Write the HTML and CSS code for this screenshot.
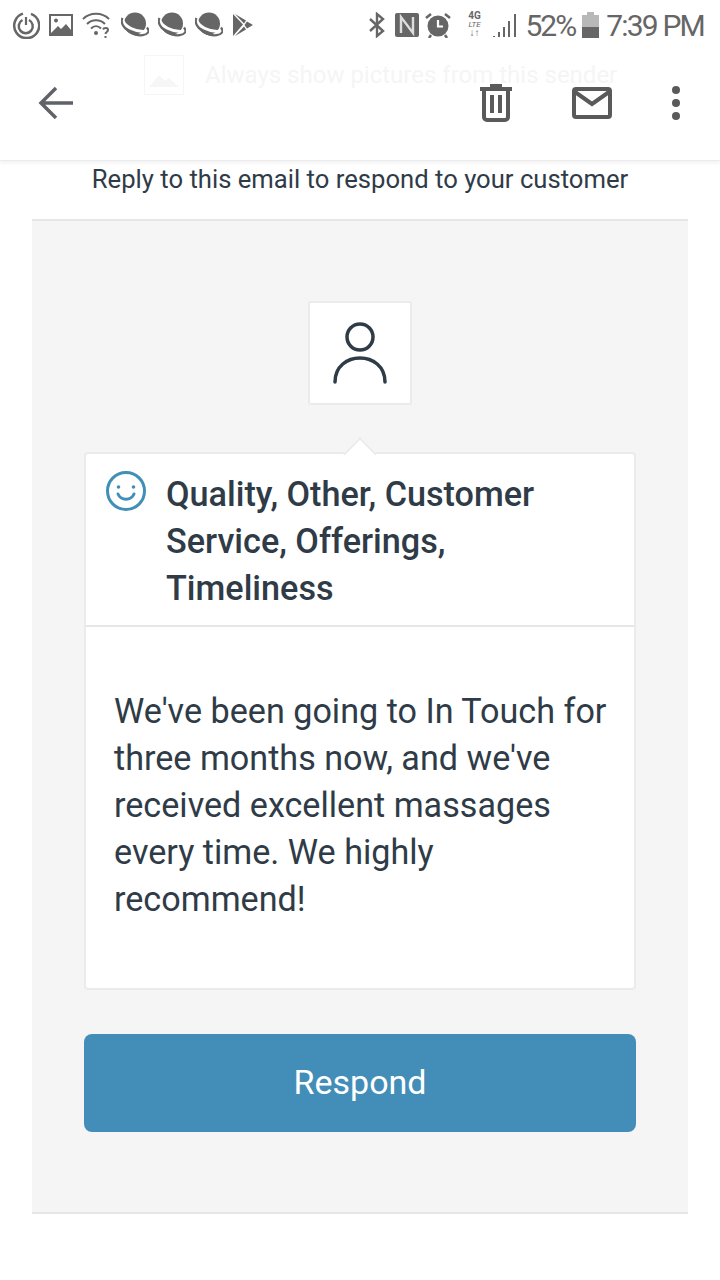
FILE: index.html
```html
<!DOCTYPE html>
<html lang="en">
<head>
    <meta charset="UTF-8">
    <meta name="viewport" content="width=device-width, initial-scale=1.0">
    <title>Review email</title>
    <link rel="stylesheet" href="styles.css">
</head>
<body>
    <svg class="sprite">
        <symbol id="planet" viewBox="0 0 28 26">
            <circle cx="14" cy="11.500" r="11" fill="#666"/>
            <path d="M1 6c1 8 13 15 26 13" fill="none" stroke="#fff" stroke-width="3"/>
            <path d="M1.500 6C-2 13 7 20 14 22.500c5 1.500 11 1 13-2 1-1 .5-3-1-5" fill="none" stroke="#666" stroke-width="2.200"/>
            <path d="M6 18c4 3 8 5 13 4-4 3-10 1-13-4z" fill="#666"/>
        </symbol>
    </svg>

    <header class="top">
        <div class="status">
            <div class="status-left">
                <svg width="28" height="28" viewBox="0 0 28 28" fill="none" stroke="#666" stroke-width="2.500"><path d="M19 2.800a12.500 12.500 0 1 1-8-.2"/><path d="M17 9a7 7 0 1 1-6.500 0"/><path d="M14 6v8" stroke-width="2.200"/></svg>
                <svg width="24" height="24" viewBox="0 0 24 24"><path fill="#666" d="M0 1h24v22H0z"/><path fill="#fff" d="M2 3h20v14l-5-6-5 5-3-3-7 7z"/><circle cx="7" cy="7.500" r="2" fill="#666"/></svg>
                <svg width="30" height="28" viewBox="0 0 30 28" fill="none" stroke="#666" stroke-width="2"><path d="M1 8c7-7 19-7 26 0M5 13c5-5 13-5 18 0M9 17.500c3-3 7-3 10 0"/><circle cx="14" cy="22" r="2" fill="#666" stroke="none"/><path d="M21 18.500c1-2 5-2 5 .5 0 2-2.500 2-2.500 4M23.500 25v2"/></svg>
                <svg class="planet" width="28" height="26"><use href="#planet"/></svg>
                <svg class="planet" width="28" height="26"><use href="#planet"/></svg>
                <svg class="planet" width="28" height="26"><use href="#planet"/></svg>
                <svg width="22" height="24" viewBox="0 0 22 24"><path fill="#666" d="M1 1l10 10.500L1 23z"/><path fill="#666" d="M3 1l11 6.500-2 3zM3 23l11-6.500-2-3zM15 8.500l6 3.500-6 3.500-2.500-3.500z"/></svg>
            </div>
            <div class="status-right">
                <svg class="bt" width="16" height="26" viewBox="0 0 16 26" fill="none" stroke="#666" stroke-width="2.400"><path d="M1 7l13 12-6 5V2l6 5L1 19"/></svg>
                <svg class="nfc" width="24" height="24" viewBox="0 0 24 24"><path fill="#666" d="M2 0h20a2 2 0 0 1 2 2v20a2 2 0 0 1-2 2H2a2 2 0 0 1-2-2V2a2 2 0 0 1 2-2z"/><path fill="none" stroke="#ddd" stroke-width="2.400" d="M6 20V4l12 16V4"/></svg>
                <svg class="alarm" width="26" height="26" viewBox="0 0 26 26"><circle cx="13" cy="14" r="10.500" fill="#666"/><path stroke="#666" stroke-width="2.500" d="M1 6l5-4M25 6l-5-4M6 23l-2 3M20 23l2 3"/><path fill="none" stroke="#fff" stroke-width="2.200" d="M13 8v6.500h5"/></svg>
                <div class="lte"><b>4G</b><i>LTE</i><b>↓↑</b></div>
                <svg class="bars" width="26" height="26" viewBox="0 0 26 26"><path fill="#666" d="M0 24h2v1H0zM5 20h2v5H5zM10 15h2v10h-2zM15 9h2v16h-2zM21 2h2v23h-2z"/></svg>
                <span class="pct">52%</span>
                <svg class="batt" width="17" height="26" viewBox="0 0 17 26"><path fill="#b8b8b8" d="M0 3h17v12H0zM5 0h7v3H5z"/><path fill="#666" d="M0 15h17v11H0z"/></svg>
                <span class="clock">7:39 PM</span>
            </div>
        </div>
        <div class="toolbar">
            <div class="ghost">
                <svg width="40" height="40" viewBox="0 0 40 40" fill="none"><rect x=".5" y=".5" width="39" height="39" stroke="#f6f6f6"/><path fill="#f6f6f6" d="M5 32l10-12 6 6 4-3 10 9z"/></svg>
                <span>Always show pictures from this sender</span>
            </div>
            <svg class="back" width="36" height="34" viewBox="0 0 36 34" fill="none" stroke="#5f6368" stroke-width="3.500"><path d="M35 17H4M18 2L3 17l15 15"/></svg>
            <div class="actions">
                <svg class="trash" width="32" height="38" viewBox="0 0 32 38" fill="none" stroke="#5a5a5a" stroke-width="4"><path d="M0 5h32M10 2h12M4 5v28a3 3 0 0 0 3 3h18a3 3 0 0 0 3-3V5M12 11v18M20 11v18"/></svg>
                <svg class="mail" width="40" height="32" viewBox="0 0 40 32" fill="none" stroke="#5a5a5a" stroke-width="4"><rect x="2" y="2" width="36" height="28" rx="2"/><path d="M3 5l17 12L37 5"/></svg>
                <div class="dots"><i></i><i></i><i></i></div>
            </div>
        </div>
    </header>

    <p class="reply">Reply to this email to respond to your customer</p>

    <main class="panel">
        <div class="avatar">
            <svg width="54" height="62" viewBox="0 0 54 62" fill="none" stroke="#2f3b47" stroke-width="3.500" stroke-linecap="round"><circle cx="27" cy="15" r="13"/><path d="M2 60c0-32 50-32 50 0"/></svg>
        </div>
        <section class="card">
            <div class="card-head">
                <svg class="smile" width="40" height="40" viewBox="0 0 40 40" fill="none" stroke="#3f8fb8" stroke-width="3"><circle cx="20" cy="20" r="18.500"/><path d="M12 23c3 7 13 7 16 0" stroke-linecap="round"/><circle cx="12.500" cy="16" r="1.800" fill="#3f8fb8" stroke="none"/><circle cx="27.500" cy="16" r="1.800" fill="#3f8fb8" stroke="none"/></svg>
                <h2>Quality, Other, Customer Service, Offerings, Timeliness</h2>
            </div>
            <p class="review">We've been going to In Touch for three months now, and we've received excellent massages every time. We highly recommend!</p>
        </section>
        <a href="#" class="button">Respond</a>
    </main>
</body>
</html>
```

FILE: styles.css
```css
* {
    box-sizing: border-box;
}
body {
    margin: 0;
    background: #fff;
    font-family: Roboto, "Noto Sans", sans-serif;
    color: #2f3b47;
    height: 1280px;
    overflow: hidden;
}
.sprite {
    display: none;
}
.top {
    height: 161px;
    border-bottom: 1px solid #ececec;
    box-shadow: 0 2px 4px rgba(0, 0, 0, 0.06);
}
.status {
    height: 50px;
    padding: 0 16px 0 12px;
    display: flex;
    justify-content: space-between;
    align-items: center;
    color: #666;
}
.status-left, .status-right {
    display: flex;
    align-items: center;
}
.status-left {
    gap: 9px;
}
.status-right {
    font-size: 30px;
    letter-spacing: -1.800px;
}
.nfc {
    margin-left: 10px;
}
.alarm {
    margin-left: 6px;
}
.lte {
    width: 16px;
    margin: 0 11px 0 15px;
    display: flex;
    flex-direction: column;
    align-items: center;
    font-size: 10px;
    line-height: 8.500px;
    letter-spacing: 0;
}
.lte i {
    font-size: 8px;
}
.pct {
    margin-left: 6px;
    letter-spacing: -2px;
}
.batt {
    margin: 0 7px 0 7px;
}
.toolbar {
    position: relative;
    height: 110px;
    padding: 0 40px 4px 38px;
    display: flex;
    justify-content: space-between;
    align-items: center;
}
.ghost {
    position: absolute;
    left: 144px;
    top: 5px;
    display: flex;
    align-items: center;
    gap: 21px;
    font-size: 24px;
    color: #f5f5f5;
}
.actions {
    display: flex;
    align-items: center;
}
.trash {
    margin-right: 60px;
}
.mail {
    margin-right: 60px;
}
.dots {
    display: flex;
    flex-direction: column;
    gap: 5px;
}
.dots i {
    width: 8px;
    height: 8px;
    border-radius: 50%;
    background: #5a5a5a;
}
.reply {
    margin: 0;
    height: 58px;
    padding-top: 2px;
    text-align: center;
    font-size: 25.650px;
    line-height: 32px;
}
.panel {
    width: 656px;
    height: 995px;
    margin: 0 auto;
    padding: 80px 52px 0;
    background: #f5f5f5;
    border-top: 2px solid #e6e6e6;
    border-bottom: 2px solid #e6e6e6;
}
.avatar {
    width: 104px;
    height: 104px;
    margin: 0 auto 47px;
    background: #fff;
    border: 2px solid #ebebeb;
    border-radius: 3px;
    display: flex;
    align-items: center;
    justify-content: center;
}
.card {
    position: relative;
    height: 538px;
    background: #fff;
    border: 2px solid #ebebeb;
    border-radius: 4px;
}
/* little arrow pointing up at the avatar */
.card::before {
    content: "";
    position: absolute;
    left: 262px;
    top: -12px;
    width: 22px;
    height: 22px;
    background: #fff;
    border-top: 2px solid #ebebeb;
    border-left: 2px solid #ebebeb;
    transform: rotate(45deg);
}
.card-head {
    position: relative;
    display: flex;
    gap: 20px;
    height: 173px;
    padding: 17px 60px 0 20px;
    border-bottom: 2px solid #e6e6e6;
}
.smile {
    flex: none;
}
.card-head h2 {
    margin: 0;
    font-size: 34.200px;
    line-height: 47px;
    font-weight: 500;
}
.review {
    margin: 0;
    padding: 61px 18px 0 28px;
    font-size: 34.150px;
    line-height: 47px;
}
.button {
    display: block;
    height: 98px;
    margin-top: 44px;
    background: #438eb9;
    border-radius: 8px;
    color: #fff;
    text-decoration: none;
    text-align: center;
    font-size: 34px;
    line-height: 97px;
}
```
